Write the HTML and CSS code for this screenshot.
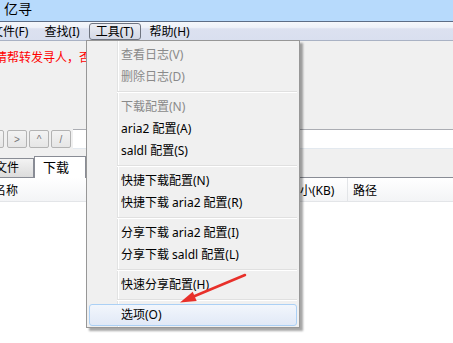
FILE: index.html
```html
<!DOCTYPE html>
<html lang="zh-CN">
<head>
    <meta charset="UTF-8">
    <meta name="viewport" content="width=device-width, initial-scale=1.0">
    <title>亿寻</title>
    <link rel="stylesheet" href="styles.css">
</head>
<body>

    <div class="window">
        <div class="titlebar">亿寻</div>

        <div class="menubar">
            <span class="menu-item">文件(F)</span>
            <span class="menu-item">查找(I)</span>
            <span class="menu-item active">工具(T)</span>
            <span class="menu-item">帮助(H)</span>
        </div>

        <div class="content">
            <p class="notice">请帮转发寻人，否则请勿使用</p>

            <div class="toolbar">
                <button class="nav-btn">&lt;</button>
                <button class="nav-btn">&gt;</button>
                <button class="nav-btn">^</button>
                <button class="nav-btn">/</button>
                <input class="path" type="text">
            </div>

            <div class="tabs">
                <div class="tab">文件</div>
                <div class="tab selected">下载</div>
                <div class="tab">分享</div>
            </div>

            <div class="list">
                <div class="list-header">
                    <span class="col col-name">名称</span>
                    <span class="col col-size">大小(KB)</span>
                    <span class="col col-path">路径</span>
                </div>
            </div>
        </div>

        <!-- menu déroulant "工具" -->
        <div class="dropdown">
            <div class="item disabled">查看日志(V)</div>
            <div class="item disabled">删除日志(D)</div>
            <div class="sep"><div></div></div>
            <div class="item disabled">下载配置(N)</div>
            <div class="item">aria2 配置(A)</div>
            <div class="item">saldl 配置(S)</div>
            <div class="sep"><div></div></div>
            <div class="item">快捷下载配置(N)</div>
            <div class="item">快捷下载 aria2 配置(R)</div>
            <div class="sep"><div></div></div>
            <div class="item">分享下载 aria2 配置(I)</div>
            <div class="item">分享下载 saldl 配置(L)</div>
            <div class="sep"><div></div></div>
            <div class="item">快速分享配置(H)</div>
            <div class="sep"><div></div></div>
            <div class="item hover">选项(O)</div>
        </div>
    </div>

    <svg class="arrow" width="453" height="343" viewBox="0 0 453 343">
        <line x1="245" y1="275" x2="190" y2="298" stroke="#e8302a" stroke-width="2.5" stroke-linecap="round"/>
        <polygon points="180,302.5 192.7,291.7 196.7,300.9" fill="#e8302a"/>
    </svg>

</body>
</html>
```

FILE: styles.css
```css
/* styles CSS */
body {
    margin: 0;
    width: 453px;
    height: 343px;
    overflow: hidden;
    position: relative;
    background-color: white;
    font-family: "Noto Sans", "Noto Sans CJK SC", sans-serif;
    font-size: 12px;
}

.window {
    position: relative;
    margin-left: -16px;
    width: 469px;
}

.titlebar {
    height: 21px;
    line-height: 18px;
    padding-left: 20px;
    font-size: 14px;
    background-color: #b7dafc;
    border-bottom: 1px solid #5d6d86;
}

.menubar {
    display: flex;
    gap: 2px;
    height: 18px;
    padding-left: 0;
    background: linear-gradient(#f5f7fb 0%, #eef1f8 30%, #dce1f0 38%, #d9dfef 100%);
    border-bottom: 1px solid #a9b2c4;
}

.menu-item {
    height: 15px;
    margin-top: 1px;
    padding: 0 6px;
    line-height: 15px;
    border: 1px solid transparent;
    border-radius: 3px;
}

.menu-item.active {
    background: linear-gradient(#eceef4, #d3d8e5);
    border-color: #6f7480;
}

.content {
    background-color: #f0f0f0;
}

.notice {
    margin: 0;
    padding: 8px 0 0 11px;
    height: 17px;
    line-height: 17px;
    color: #ff0000;
}

.toolbar {
    display: flex;
    align-items: center;
    gap: 2px;
    margin-top: 63px;
    height: 20px;
}

.nav-btn {
    width: 20px;
    height: 18px;
    padding: 0;
    font-size: 10px;
    color: #777;
    background: linear-gradient(#f3f3f3, #e6e6e6);
    border: 1px solid #b3b3b3;
    border-radius: 2px;
}

.nav-btn:first-child {
    margin-right: 1px;
}

.path {
    flex: 1;
    height: 20px;
    box-sizing: border-box;
    border: none;
    border-top: 1px solid #abadb3;
    border-bottom: 1px solid #e3e9ef;
    background-color: white;
}

.tabs {
    display: flex;
    align-items: flex-end;
    height: 21px;
    padding-top: 7px;
    border-bottom: 1px solid #898c95;
}

.tab {
    width: 38px;
    height: 18px;
    padding-left: 10px;
    line-height: 18px;
    background: linear-gradient(#f3f3f3, #dcdcdc);
    border: 1px solid #898c95;
    border-bottom: none;
}

.tab.selected {
    width: 42px;
    height: 21px;
    padding-left: 8px;
    line-height: 20px;
    font-size: 13px;
    margin-bottom: -1px;
    background: white;
}

.list {
    height: 166px;
    background-color: white;
}

.list-header {
    display: flex;
    height: 23px;
    line-height: 25px;
    background: linear-gradient(#ffffff, #f3f4f6);
    border-bottom: 1px solid #e3e5e8;
}

.col {
    box-sizing: border-box;
}

.col-name {
    width: 299px;
    padding-left: 10px;
}

.col-size {
    width: 65px;
    padding-left: 5px;
    border-right: 1px solid #e3e5e8;
}

.col-path {
    padding-left: 5px;
}

.dropdown {
    position: absolute;
    left: 102px;
    top: 40px;
    width: 214px;
    box-sizing: border-box;
    padding: 3px 2px 1px;
    background: linear-gradient(to right, transparent 30px, #e2e3e3 30px, #e2e3e3 31px, #ffffff 31px, #ffffff 32px, transparent 32px), #f0f0f0;
    border: 1px solid #979797;
    box-shadow: 3px 3px 2px rgba(0, 0, 0, 0.35);
}

.item {
    height: 22px;
    line-height: 22px;
    padding-left: 32px;
    color: black;
}

.item.disabled {
    color: #8a8a8a;
}

.item.hover {
    height: 20px;
    line-height: 20px;
    padding-left: 31px;
    border: 1px solid #abd0f5;
    border-radius: 3px;
    background: linear-gradient(#f2f6fc, #e1e9f7);
}

.sep {
    height: 8px;
    padding-left: 28px;
    box-sizing: border-box;
    padding-top: 3px;
}

.sep div {
    border-top: 1px solid #e0e0e0;
    border-bottom: 1px solid #ffffff;
}

.arrow {
    position: absolute;
    left: 0;
    top: 0;
    pointer-events: none;
}
```
